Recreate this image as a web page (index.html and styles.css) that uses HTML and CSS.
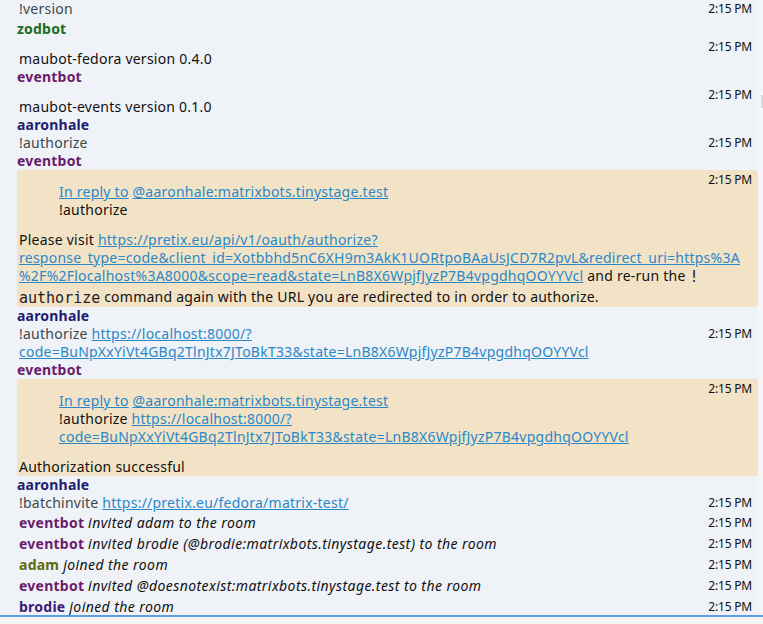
FILE: index.html
```html
<!DOCTYPE html>
<html lang="en">
<head>
<meta charset="utf-8">
<title>Room</title>
<link rel="stylesheet" href="styles.css">
</head>
<body>
<div class="app">
  <main class="timeline">
    <div class="msg cmd first"><div class="body">!version</div><time class="ts">2:15 PM</time></div>

    <div class="sender c-zodbot top-gap">zodbot</div>
    <div class="msg notice"><div class="body"><p>maubot-fedora version 0.4.0</p></div><time class="ts">2:15 PM</time></div>

    <div class="sender c-eventbot">eventbot</div>
    <div class="msg notice"><div class="body"><p>maubot-events version 0.1.0</p></div><time class="ts">2:15 PM</time></div>

    <div class="sender c-aaron">aaronhale</div>
    <div class="msg cmd"><div class="body">!authorize</div><time class="ts">2:15 PM</time></div>

    <div class="sender c-eventbot">eventbot</div>
    <div class="msg notice highlight">
      <div class="body">
        <blockquote class="reply"><a href="#">In reply to</a> <a href="#">@aaronhale:matrixbots.tinystage.test</a><br>!authorize</blockquote>
        <p class="last">Please visit <a href="#">https://pretix.eu/api/v1/oauth/authorize?<br>response_type=code&amp;client_id=Xotbbhd5nC6XH9m3AkK1UORtpoBAaUsJCD7R2pvL&amp;redirect_uri=https%3A<br>%2F%2Flocalhost%3A8000&amp;scope=read&amp;state=LnB8X6WpjfJyzP7B4vpgdhqOOYYVcl</a> and re-run the <code>!<br>authorize</code> command again with the URL you are redirected to in order to authorize.</p>
      </div>
      <time class="ts">2:15 PM</time>
    </div>

    <div class="sender c-aaron">aaronhale</div>
    <div class="msg cmd"><div class="body">!authorize <a href="#">https://localhost:8000/?<br>code=BuNpXxYiVt4GBq2TlnJtx7JToBkT33&amp;state=LnB8X6WpjfJyzP7B4vpgdhqOOYYVcl</a></div><time class="ts">2:15 PM</time></div>

    <div class="sender c-eventbot">eventbot</div>
    <div class="msg notice highlight">
      <div class="body">
        <blockquote class="reply"><a href="#">In reply to</a> <a href="#">@aaronhale:matrixbots.tinystage.test</a><br>!authorize <a href="#">https://localhost:8000/?<br>code=BuNpXxYiVt4GBq2TlnJtx7JToBkT33&amp;state=LnB8X6WpjfJyzP7B4vpgdhqOOYYVcl</a></blockquote>
        <p>Authorization successful</p>
      </div>
      <time class="ts">2:15 PM</time>
    </div>

    <div class="sender c-aaron">aaronhale</div>
    <div class="msg cmd"><div class="body">!batchinvite <a href="#">https://pretix.eu/fedora/matrix-test/</a></div><time class="ts">2:15 PM</time></div>

    <div class="state"><div class="body"><b class="c-eventbot">eventbot</b> <i>invited adam to the room</i></div><time class="ts">2:15 PM</time></div>
    <div class="state"><div class="body"><b class="c-eventbot">eventbot</b> <i>invited brodie (@brodie:matrixbots.tinystage.test) to the room</i></div><time class="ts">2:15 PM</time></div>
    <div class="state"><div class="body"><b class="c-adam">adam</b> <i>joined the room</i></div><time class="ts">2:15 PM</time></div>
    <div class="state"><div class="body"><b class="c-eventbot">eventbot</b> <i>invited @doesnotexist:matrixbots.tinystage.test to the room</i></div><time class="ts">2:15 PM</time></div>
    <div class="state"><div class="body"><b class="c-brodie">brodie</b> <i>joined the room</i></div><time class="ts">2:15 PM</time></div>
  </main>
  <div class="scrollbar"><div class="thumb"></div></div>
</div>
<div class="composer"></div>
</body>
</html>
```
FILE: styles.css
```css
* { box-sizing: border-box; }
html, body {
  margin: 0;
  padding: 0;
  height: 100%;
  overflow: hidden;
}
body {
  font-family: "Noto Sans", "DejaVu Sans", sans-serif;
  font-size: 14px;
  line-height: 18px;
  color: #111;
  background: #f4f4f4;
  display: flex;
  flex-direction: column;
}
.app {
  height: 615px;
  display: flex;
  overflow: hidden;
  background: #eff2f7;
}
.timeline {
  width: 758px;
  padding-left: 17px;
  display: flex;
  flex-direction: column;
}
.scrollbar {
  flex: 1;
  background: #f4f5f7;
  padding-top: 95px;
}
.thumb {
  margin-left: 3px;
  width: 2px;
  height: 13px;
  background: #d6d8dc;
  border-radius: 1px 0 0 1px;
}
.composer {
  flex: 1;
  border-top: 2px solid #5d9de0;
  background: #f4f4f4;
}

a { color: #2b88c8; text-decoration: underline; }

.sender {
  font-weight: bold;
  line-height: 18px;
  letter-spacing: 0.2px;
}
.top-gap { margin-top: 2px; }
.c-zodbot { color: #1a6e1a; }
.c-eventbot { color: #6a1c6b; }
.c-aaron { color: #1e1d6f; }
.c-adam { color: #5a6b12; }
.c-brodie { color: #3b1b78; }

.msg, .state {
  display: flex;
  align-items: flex-start;
}
.body {
  flex: 1;
  min-width: 0;
  padding-left: 2px;
  letter-spacing: 0.24px;
}
.ts {
  flex: none;
  font-size: 12px;
  line-height: 18px;
  padding-right: 6px;
  color: #111;
  letter-spacing: -0.2px;
}
.cmd .body { color: #3c4848; }

.notice .body { padding-top: 12px; }
.notice p { margin: 0; }

.highlight {
  background: #f2e3c6;
  border-radius: 3px;
  padding-top: 1px;
}
.highlight .body { padding-top: 0; }
.reply {
  margin: 12px 0 12px 40px;
}
.last { margin-bottom: -2px !important; }
code {
  font-family: "DejaVu Sans Mono", monospace;
  font-size: 15px;
  line-height: 21px;
  letter-spacing: 0;
  vertical-align: top;
  color: #222;
}

.state {
  line-height: 21px;
}
.state .ts { line-height: 21px; }
.state b { font-weight: bold; }
.state i { letter-spacing: 0.42px; }
```
